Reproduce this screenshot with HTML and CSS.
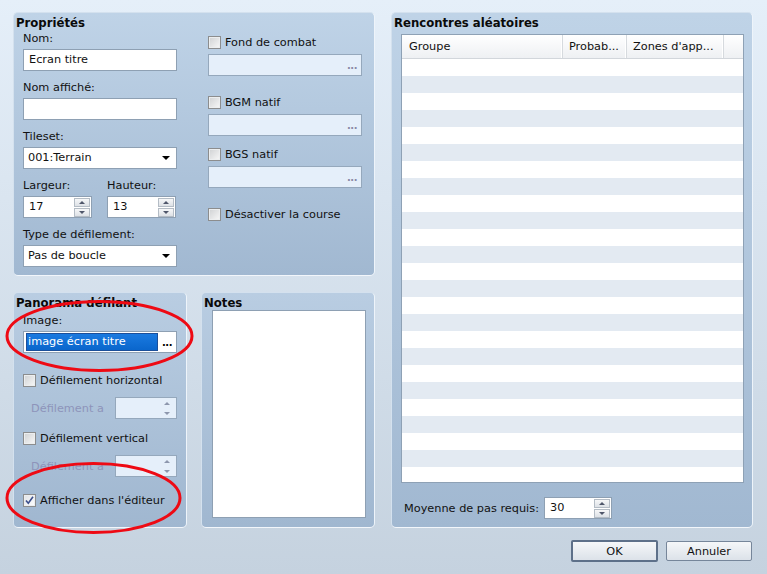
FILE: index.html
```html
<!DOCTYPE html>
<html lang="fr">
<head>
    <meta charset="UTF-8">
    <meta name="viewport" content="width=device-width, initial-scale=1.0">
    <title>Propriétés de la carte</title>
    <link rel="stylesheet" href="styles.css">
</head>
<body>
<div class="dialog">

    <div class="main">
        <div class="left">

            <section class="panel props">
                <h2 class="panel-title">Propriétés</h2>
                <div class="props-body">

                    <div class="col">
                        <div class="field">
                            <label>Nom:</label>
                            <div class="input">Ecran titre</div>
                        </div>
                        <div class="field">
                            <label>Nom affiché:</label>
                            <div class="input"></div>
                        </div>
                        <div class="field">
                            <label>Tileset:</label>
                            <div class="input select">001:Terrain<span class="drop"></span></div>
                        </div>
                        <div class="field pair">
                            <div class="sub">
                                <label>Largeur:</label>
                                <div class="spin">
                                    <span class="val">17</span>
                                    <span class="arrows"><span class="arrow up"></span><span class="arrow down"></span></span>
                                </div>
                            </div>
                            <div class="sub">
                                <label>Hauteur:</label>
                                <div class="spin">
                                    <span class="val">13</span>
                                    <span class="arrows"><span class="arrow up"></span><span class="arrow down"></span></span>
                                </div>
                            </div>
                        </div>
                        <div class="field">
                            <label>Type de défilement:</label>
                            <div class="input select">Pas de boucle<span class="drop"></span></div>
                        </div>
                    </div>

                    <div class="col col-right">
                        <div class="group">
                            <div class="check"><span class="cb"></span>Fond de combat</div>
                            <div class="input disabled browse"><span class="fill"></span><span class="dots">...</span></div>
                        </div>
                        <div class="group g2">
                            <div class="check"><span class="cb"></span>BGM natif</div>
                            <div class="input disabled browse"><span class="fill"></span><span class="dots">...</span></div>
                        </div>
                        <div class="group g3">
                            <div class="check"><span class="cb"></span>BGS natif</div>
                            <div class="input disabled browse"><span class="fill"></span><span class="dots">...</span></div>
                        </div>
                        <div class="check g2"><span class="cb"></span>Désactiver la course</div>
                    </div>

                </div>
            </section>

            <div class="bottom-row">
                <section class="panel pano">
                    <h2 class="panel-title">Panorama défilant</h2>
                    <div class="pano-body">
                        <label class="img-label">Image:</label>
                        <div class="input browse">
                            <span class="sel">image écran titre</span><span class="dots dark">...</span>
                        </div>

                        <div class="check c1"><span class="cb"></span>Défilement horizontal</div>
                        <div class="off-row">
                            <span class="off-label">Défilement a</span>
                            <div class="spin disabled">
                                <span class="val"></span>
                                <span class="arrows"><span class="arrow up"></span><span class="arrow down"></span></span>
                            </div>
                        </div>

                        <div class="check c2"><span class="cb"></span>Défilement vertical</div>
                        <div class="off-row">
                            <span class="off-label">Défilement a</span>
                            <div class="spin disabled">
                                <span class="val"></span>
                                <span class="arrows"><span class="arrow up"></span><span class="arrow down"></span></span>
                            </div>
                        </div>

                        <div class="check c3">
                            <span class="cb checked">
                                <svg width="11" height="11" viewBox="0 0 11 11"><path d="M2 5.5 L4.3 8.3 L9 1.8" fill="none" stroke="#3b4f8c" stroke-width="1.6"/></svg>
                            </span>Afficher dans l'éditeur
                        </div>
                    </div>
                </section>

                <section class="panel notes">
                    <h2 class="panel-title">Notes</h2>
                    <div class="notes-body">
                        <div class="textarea"></div>
                    </div>
                </section>
            </div>

        </div>

        <section class="panel encounters">
            <h2 class="panel-title">Rencontres aléatoires</h2>
            <div class="enc-body">
                <div class="grid">
                    <div class="grid-head">
                        <div class="hc c-group">Groupe</div>
                        <div class="hc c-prob">Probab...</div>
                        <div class="hc c-zone">Zones d'app...</div>
                        <div class="hc c-rest"></div>
                    </div>
                    <div class="grid-rows"></div>
                </div>
                <div class="steps">
                    <span>Moyenne de pas requis:</span>
                    <div class="spin steps-spin">
                        <span class="val">30</span>
                        <span class="arrows"><span class="arrow up"></span><span class="arrow down"></span></span>
                    </div>
                </div>
            </div>
        </section>
    </div>

    <div class="buttons">
        <button class="btn default">OK</button>
        <button class="btn">Annuler</button>
    </div>

    <svg class="marks" width="767" height="574" viewBox="0 0 767 574">
        <ellipse cx="99.5" cy="336" rx="92.5" ry="34.5" fill="none" stroke="#ee0a14" stroke-width="3"/>
        <ellipse cx="93.5" cy="498" rx="86.5" ry="34.5" fill="none" stroke="#ee0a14" stroke-width="3"/>
    </svg>

</div>
</body>
</html>
```

FILE: styles.css
```css
*{
    margin: 0;
    padding: 0;
    box-sizing: border-box;
}

body{
    font-family: "DejaVu Sans", Verdana, sans-serif;
    font-size: 11.3px;
    color: #111;
}

.dialog{
    position: relative;
    width: 767px;
    height: 574px;
    padding: 12px 14px 0 13px;
    background: linear-gradient(#e5eff9, #c5d2df);
    overflow: hidden;
}

.main{
    display: flex;
    gap: 16px;
    height: 516px;
}

.left{
    width: 362px;
    display: flex;
    flex-direction: column;
    gap: 16px;
}

/* panels */
.panel{
    border: 1px solid #d4e1ee;
    border-right-color: #eef4fa;
    border-bottom-color: #f2f6fb;
    border-radius: 5px;
    background: linear-gradient(#bfd3e7, #a1b8d1);
}

.panel-title{
    font-size: 11.7px;
    font-weight: bold;
    line-height: 16px;
    padding: 2px 0 0 2px;
    color: #0a0a0a;
    white-space: nowrap;
}

.props{
    height: 264px;
}

.props-body{
    display: flex;
    gap: 31px;
    padding: 0 9px;
}

.col{
    width: 154px;
}

.col-right{
    padding-top: 3px;
}

.field{
    margin-bottom: 10px;
}

.field label, .img-label{
    display: block;
    line-height: 14px;
    margin-bottom: 3px;
}

.field:first-child label{
    margin-top: 1px;
}

.pair{
    display: flex;
    gap: 15px;
}

.sub{
    width: 69px;
}

/* inputs */
.input{
    height: 22px;
    border: 1px solid #8ea0b3;
    background: #fff;
    line-height: 20px;
    padding: 0 5px;
    white-space: nowrap;
}

.input.disabled{
    background: #e5effa;
    border-color: #95a8bc;
}

.select{
    position: relative;
    padding-left: 4px;
}

.drop{
    position: absolute;
    right: 6px;
    top: 8px;
    border-left: 4px solid transparent;
    border-right: 4px solid transparent;
    border-top: 4px solid #000;
}

.browse{
    display: flex;
    align-items: center;
    padding: 0;
}

.browse .fill{
    flex: 1;
}

.dots{
    width: 18px;
    text-align: center;
    font-size: 10px;
    letter-spacing: -0.5px;
    color: #8a8aa6;
    line-height: 14px;
    padding-top: 2px;
    font-weight: bold;
}

.dots.dark{
    color: #000;
}

.sel{
    flex: 1;
    height: 18px;
    margin-left: 2px;
    background: linear-gradient(#1a7ae0, #0a66cc);
    border: 1px solid #1b4f9a;
    color: #fff;
    line-height: 16px;
    padding-left: 1px;
}

/* spin boxes */
.spin{
    display: flex;
    height: 22px;
    border: 1px solid #8ea0b3;
    background: #fff;
}

.spin .val{
    flex: 1;
    line-height: 20px;
    padding-left: 5px;
}

.arrows{
    display: flex;
    flex-direction: column;
    gap: 1px;
    padding: 0 1px 0 0;
    justify-content: center;
}

.arrow{
    width: 16px;
    height: 9px;
    border: 1px solid #b4bcc5;
    background: linear-gradient(#f6f7f8, #dde1e6);
    display: flex;
    align-items: center;
    justify-content: center;
}

.arrow::after{
    content: "";
    border-left: 3px solid transparent;
    border-right: 3px solid transparent;
}

.arrow.up::after{
    border-bottom: 3px solid #4f566a;
}

.arrow.down::after{
    border-top: 3px solid #4f566a;
}

.spin.disabled{
    background: #e5effa;
    border-color: #95a8bc;
}

.spin.disabled .arrow{
    border: none;
    background: none;
}

.spin.disabled .arrow.up::after{
    border-bottom-color: #8d97ad;
}

.spin.disabled .arrow.down::after{
    border-top-color: #8d97ad;
}

/* check boxes */
.check{
    display: flex;
    align-items: center;
    gap: 4px;
    height: 16px;
    white-space: nowrap;
}

.cb{
    width: 13px;
    height: 13px;
    border: 1px solid #8c8d8e;
    background: linear-gradient(135deg, #cfd1d3, #f8f8f8);
    box-shadow: inset 0 0 0 1px #eceeef;
    display: flex;
    align-items: center;
    justify-content: center;
}

.cb.checked{
    background: linear-gradient(135deg, #dfe2e6, #ffffff);
}

.group .input{
    margin-top: 4px;
}

.g2{
    margin-top: 18px;
}

.g3{
    margin-top: 10px;
}

/* bottom left panels */
.bottom-row{
    display: flex;
    gap: 14px;
    height: 236px;
}

.pano, .notes{
    width: 174px;
    background: linear-gradient(#b9cde2, #a0b7d0);
}

.pano-body{
    padding: 0 9px;
}

.img-label{
    margin-top: 3px;
}

.c1{
    margin-top: 19px;
}

.c2{
    margin-top: 11px;
}

.c3{
    margin-top: 15px;
}

.off-row{
    display: flex;
    justify-content: space-between;
    align-items: center;
    margin-top: 9px;
    height: 22px;
}

.off-label{
    padding-left: 8px;
    color: #8e94ba;
    white-space: nowrap;
}

.off-row .spin{
    width: 62px;
}

.notes-body{
    padding: 0 8px 0 10px;
}

.textarea{
    margin-top: -1px;
    height: 208px;
    border: 1px solid #8ea0b3;
    background: #fff;
}

/* encounters */
.encounters{
    width: 362px;
    height: 516px;
    display: flex;
    flex-direction: column;
    padding-bottom: 8px;
}

.enc-body{
    flex: 1;
    display: flex;
    flex-direction: column;
    padding: 3px 8px 0 9px;
}

.grid{
    flex: 1;
    display: flex;
    flex-direction: column;
    border: 1px solid #8ea1b5;
    background: #fff;
    overflow: hidden;
}

.grid-head{
    display: flex;
    height: 24px;
    background: linear-gradient(#ffffff, #eef0f3);
    border-bottom: 1px solid #d2d6db;
}

.hc{
    line-height: 24px;
    padding-left: 7px;
    border-right: 1px solid #d6dade;
    box-shadow: inset -1px 0 #ffffff;
    white-space: nowrap;
    color: #111;
}

.c-group{
    width: 161px;
}

.c-prob{
    width: 64px;
    padding-left: 6px;
}

.c-zone{
    width: 97px;
    padding-left: 6px;
}

.c-rest{
    flex: 1;
    border-right: none;
    box-shadow: none;
}

.grid-rows{
    flex: 1;
    background: repeating-linear-gradient(#ffffff 0 17px, #e3eaf2 17px 34px);
}

.steps{
    display: flex;
    align-items: center;
    gap: 5px;
    margin-top: 14px;
    padding-left: 3px;
    white-space: nowrap;
}

.steps-spin{
    width: 68px;
}

/* buttons */
.buttons{
    display: flex;
    justify-content: flex-end;
    align-items: center;
    gap: 8px;
    margin-top: 12px;
    padding-right: 1px;
}

.btn{
    font-family: "DejaVu Sans", Verdana, sans-serif;
    font-size: 11.3px;
    color: #111;
    width: 86px;
    height: 20px;
    border: 1px solid #76869a;
    border-radius: 2px;
    background: linear-gradient(#f5f7f9, #dce2e9);
}

.btn.default{
    width: 87px;
    height: 22px;
    border: 2px solid #5d7089;
}

.marks{
    position: absolute;
    top: 0;
    left: 0;
    pointer-events: none;
}
```
